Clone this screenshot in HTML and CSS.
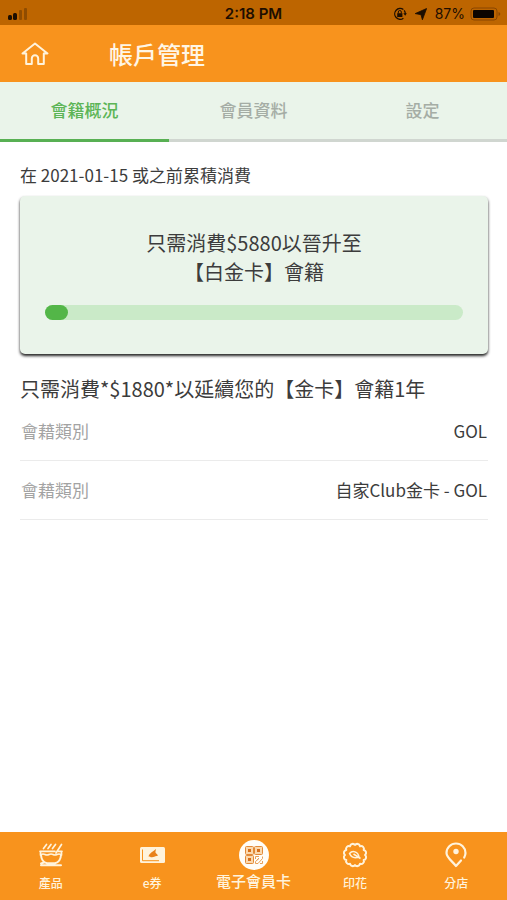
FILE: index.html
```html
<!DOCTYPE html>
<html lang="zh-Hant">
<head>
<meta charset="utf-8">
<meta name="viewport" content="width=device-width, initial-scale=1">
<title>帳戶管理</title>
<link rel="stylesheet" href="styles.css">
</head>
<body>
<div class="status">
  <div class="status-left">
    <svg width="22" height="14" viewBox="0 0 22 14"><rect x="2" y="8" width="4" height="5" rx="1.5" fill="#1d0e00"/><rect x="7" y="6" width="4" height="7" rx="1.5" fill="#1d0e00"/><rect x="13" y="3" width="3" height="10" rx="1" fill="#8f4c00"/><rect x="18" y="1" width="3" height="12" rx="1" fill="#8f4c00"/></svg>
  </div>
  <div class="status-time">2:18 PM</div>
  <div class="status-right">
    <svg width="14" height="14" viewBox="0 0 14 14" fill="none" stroke="#1d0e00" stroke-width="1.3"><path d="M10.4 2.6A5.4 5.4 0 1 0 10.4 11.2M11.2 3.4A5.4 5.4 0 0 1 12.3 7"/><path d="M10.3 6.3h3.6L12.2 8.8z" fill="#1d0e00" stroke="none"/><rect x="4.2" y="6.2" width="5.2" height="3.8" fill="#1d0e00" stroke="none"/><path d="M5.3 6.3V5a1.5 1.5 0 0 1 3 0v1.3" stroke-width="1"/></svg>
    <svg class="arrow" width="12" height="12" viewBox="0 0 12 12"><path d="M11.6.5 7.400 11.8 6 6.700.2 5.600z" fill="#1d0e00" stroke="#1d0e00" stroke-width=".8" stroke-linejoin="round"/></svg>
    <span>87%</span>
    <svg width="31" height="14" viewBox="0 0 31 14"><rect x="1" y="1" width="26" height="12" rx="3" fill="none" stroke="#8a4700"/><rect x="3" y="3" width="21" height="8" rx="1" fill="#0c0500"/><path d="M28.5 5v4q1.8-.7 1.8-2t-1.8-2z" fill="#8a4700"/></svg>
  </div>
</div>
<header class="header">
  <a class="home" href="#" aria-label="主頁">
    <svg width="28" height="24" viewBox="0 0 28 24" fill="none" stroke="#fff3dc" stroke-width="2" stroke-linejoin="round" stroke-linecap="round"><path d="M1.5 11.5 14 1.5l12.500 10H22.800V22h-5.600v-5.500a3.200 3.200 0 0 0-6.400 0V22H5.200V11.500z"/></svg>
  </a>
  <h1>帳戶管理</h1>
</header>
<nav class="tabs">
  <a class="tab active" href="#">會籍概況</a>
  <a class="tab" href="#">會員資料</a>
  <a class="tab" href="#">設定</a>
</nav>
<main class="content">
  <p class="period">在 2021-01-15 或之前累積消費</p>
  <section class="card">
    <p>只需消費$5880以晉升至<br>【白金卡】會籍</p>
    <div class="track"><div class="fill"></div></div>
  </section>
  <p class="renew">只需消費*$1880*以延續您的【金卡】會籍1年</p>
  <dl class="rows">
    <div class="row"><dt>會藉類別</dt><dd>GOL</dd></div>
    <div class="row"><dt>會藉類別</dt><dd>自家Club金卡 - GOL</dd></div>
  </dl>
</main>
<nav class="bottom">
  <a href="#">
    <svg width="26" height="26" viewBox="0 0 26 26" fill="none" stroke="#fff3dc" stroke-width="1.700" stroke-linecap="round" stroke-linejoin="round"><path d="M5.500 6.500 8.500 2.500M10 6.500l3-4M14.500 6.500l3-4M18 11l5.500-8.500"/><path d="M2 9.300h15M20.500 9.300H24M2.500 9.500v3.500M23.500 9.500v3.500"/><path d="M3 12.500q2-1 4 0t4 0 4 0 4 0 4 0"/><path d="M3 13c.3 5 3.500 7.600 6 8.200h8c2.500-.6 5.700-3.200 6-8.200M3 23.300h20M6 20.500l-3 1" stroke-width="2"/></svg>
    <span>產品</span>
  </a>
  <a href="#">
    <svg width="26" height="26" viewBox="0 0 26 26"><rect x="1" y="5" width="25" height="16" rx="1.500" fill="#fff3dc"/><path d="M3.500 7.500v11.200H20" fill="none" stroke="#f8931d"/><path d="M9.500 14.500c1-3.500 4-4.500 7.500-7.500-.5 2.500-1 3.600.2 4.500 1 .8 1.500 1.200 1.500 2.600-2.700-.6-3.700 1.400-6 1.200-1.400-.1-1.800-.8-3.200-.8z" fill="#e9811a"/></svg>
    <span>e券</span>
  </a>
  <a class="member" href="#">
    <svg width="30" height="30" viewBox="0 0 30 30"><circle cx="15" cy="15" r="15" fill="#fffdf8"/><g fill="#fbd9ae" stroke="#e28a38" stroke-width="1"><rect x="6.500" y="6.500" width="8" height="8" rx="1"/><rect x="15.500" y="6.500" width="8" height="8" rx="1"/><rect x="6.500" y="15.500" width="8" height="8" rx="1"/></g><path d="M9 9h3v3H9zM18 9h3v3h-3zM9 18h3v3H9z" fill="#d86f1b"/><path d="M16.500 19v-2.500H20M23.500 16.500v2L19 23.500h-2.500v-2l3.500-3M23.500 21v2.500H21M18 20l2-2" fill="none" stroke="#e8a058" stroke-width="1"/></svg>
    <span>電子會員卡</span>
  </a>
  <a href="#">
    <svg width="26" height="26" viewBox="0 0 26 26" fill="none" stroke="#fff3dc" stroke-width="2" stroke-linejoin="round"><path d="M23 13A2.800 2.800 0 0 1 21.700 18A2.800 2.800 0 0 1 18 21.700A2.800 2.800 0 0 1 13 23A2.800 2.800 0 0 1 8 21.700A2.800 2.800 0 0 1 4.300 18A2.800 2.800 0 0 1 3 13A2.800 2.800 0 0 1 4.300 8A2.800 2.800 0 0 1 8 4.300A2.800 2.800 0 0 1 13 3A2.800 2.800 0 0 1 18 4.300A2.800 2.800 0 0 1 21.700 8A2.800 2.800 0 0 1 23 13z"/><path d="M7.500 11.500c3-3.500 8.500-2 9.500 3.500-4.500 1.500-8 0-9.500-3.500zM11.500 12l7 4.500" stroke-width="1.500"/></svg>
    <span>印花</span>
  </a>
  <a href="#">
    <svg width="26" height="26" viewBox="0 0 26 26" fill="none" stroke="#fff3dc" stroke-width="2.200" stroke-linecap="round" stroke-linejoin="round"><path d="M21.200 15.500C22 14 22.500 13 22.500 11a9.500 9.500 0 1 0-19 0c0 4.500 5.500 8 9.500 13l5-5.500"/><circle cx="13" cy="9.500" r="2.700" fill="#fff3dc" stroke="none"/></svg>
    <span>分店</span>
  </a>
</nav>
</body>
</html>
```
FILE: styles.css
```css
* { box-sizing: border-box; }
body {
  margin: 0;
  min-height: 100vh;
  display: flex;
  flex-direction: column;
  background: #fff;
  color: #3c3c3c;
  font-family: "Noto Sans CJK TC", sans-serif;
  font-size: 17px;
  line-height: 24px;
}
a { color: inherit; text-decoration: none; }
svg { display: block; flex: none; }
p, h1, dl, dd { margin: 0; }

.status {
  display: grid;
  grid-template-columns: 1fr auto 1fr;
  align-items: center;
  height: 25px;
  padding: 2px 6px 0;
  background: #bd6500;
  color: #1d0e00;
  font-family: Inter, sans-serif;
  font-size: 14px;
}
.status-time { font-size: 15px; font-weight: 600; }
.status-right {
  display: flex;
  align-items: center;
  justify-content: flex-end;
  gap: 5px;
}
.arrow { margin: 0 3px; }

.header {
  display: flex;
  align-items: center;
  gap: 60px;
  height: 57px;
  padding: 0 21px;
  background: #f8931d;
  color: #fff6e6;
}
.header h1 { font-size: 24px; line-height: 36px; font-weight: 500; }

.tabs {
  display: flex;
  background: #eaf4ea;
  color: #a5ada5;
  font-weight: 500;
}
.tab {
  flex: 1;
  padding: 16px 0 17px;
  border-bottom: 3px solid #d0d6d0;
  text-align: center;
}
.tab.active { color: #5cb557; border-color: #58b053; }

.content { flex: 1; padding: 21px 19px 0 20px; }
.card {
  margin-top: 9px;
  padding: 32px 25px 34px;
  border-radius: 5px;
  background: #eaf4ea;
  box-shadow: 0 2px 3px #222;
  text-align: center;
}
.card p { font-size: 20px; line-height: 29px; }
.track {
  height: 15px;
  margin-top: 19px;
  border-radius: 8px;
  background: #caeac8;
}
.fill { width: 23px; height: 15px; border-radius: 8px; background: #53b648; }
.renew { margin-top: 20px; font-size: 20px; line-height: 30px; }
.row {
  display: flex;
  justify-content: space-between;
  padding: 17px 1px;
  border-bottom: 1px solid #ebebeb;
}
.row:first-child { padding-top: 15px; }
.row dt { color: #a3a3a3; }

.bottom {
  display: flex;
  height: 68px;
  background: #f8931d;
  color: #fff3dc;
  font-size: 12px;
  line-height: 18px;
  font-weight: 500;
}
.bottom a {
  flex: 1;
  display: flex;
  flex-direction: column;
  align-items: center;
  padding-top: 10px;
  gap: 6px;
}
.bottom .member { padding-top: 8px; gap: 2px; font-size: 15px; }
```
